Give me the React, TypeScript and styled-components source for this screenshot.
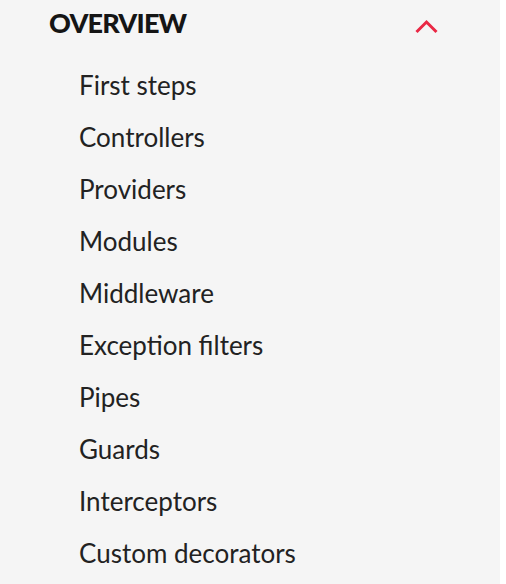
import React from "react";
import styled, { createGlobalStyle } from "styled-components";

const Global = createGlobalStyle`
  html, body { margin: 0; padding: 0; background: #ffffff; }
  body { font-family: "Lato", "Open Sans", sans-serif; }
`;

const Panel = styled.nav`
  width: 500px;
  min-height: 100vh;
  background: #f5f5f5;
  box-sizing: border-box;
  padding: 0 62px 0 49px;
`;

const Header = styled.div`
  display: flex;
  align-items: center;
  justify-content: space-between;
  height: 46px;
`;

const Title = styled.h2`
  margin: 0;
  font-family: "Lato", sans-serif;
  font-weight: 900;
  font-size: 27px;
  line-height: 46px;
  color: #151515;
  letter-spacing: -0.8px;
`;

const Chevron = styled.svg`
  display: block;
  margin-top: 6px;
  color: #ea2845;
`;

const List = styled.ul`
  list-style: none;
  margin: 13px 0 0;
  padding: 0 0 0 30px;
`;

const Item = styled.li`
  font-family: "Lato", sans-serif;
  font-size: 26px;
  line-height: 52px;
  height: 52px;
  color: #222222;
`;

const items = [
  "First steps",
  "Controllers",
  "Providers",
  "Modules",
  "Middleware",
  "Exception filters",
  "Pipes",
  "Guards",
  "Interceptors",
  "Custom decorators",
];

export default function App() {
  return (
    <>
      <Global />
      <Panel>
        <Header>
          <Title>OVERVIEW</Title>
          <Chevron width="23" height="15" viewBox="0 0 23 15" fill="none">
            <polyline points="1.5,13 11.5,3 21.5,13" stroke="currentColor" strokeWidth="3" />
          </Chevron>
        </Header>
        <List>
          {items.map((t) => (
            <Item key={t}>{t}</Item>
          ))}
        </List>
      </Panel>
    </>
  );
}
